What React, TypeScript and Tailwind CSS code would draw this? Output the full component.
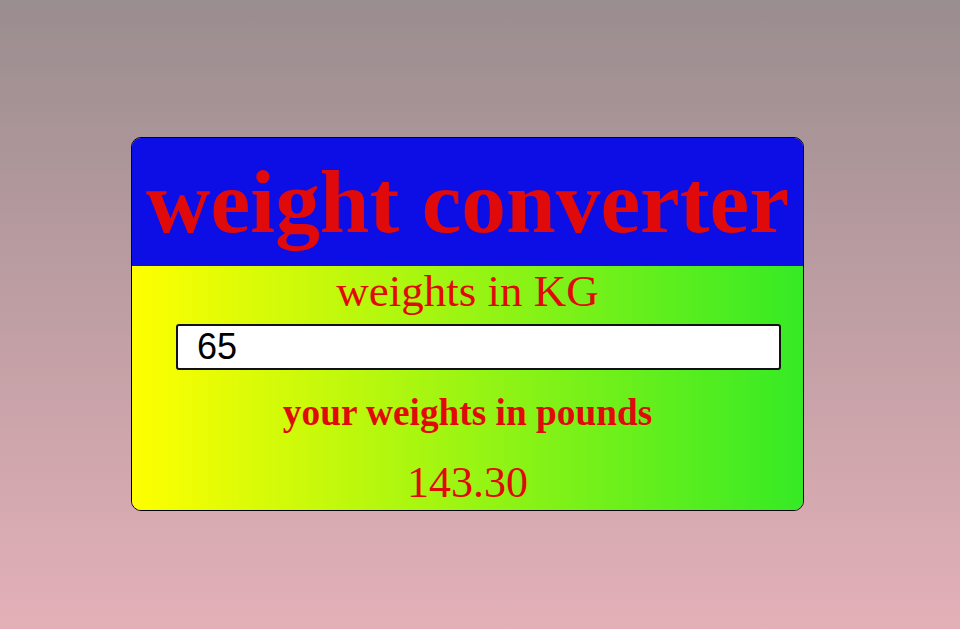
import React from "react";

export default function App() {
  return (
    <div className="min-h-[629px] w-full bg-[linear-gradient(to_bottom,#9a8d8f,#e4b0b8)] pt-[137px] pl-[131px]">
      <div className="w-[673px] overflow-hidden rounded-[10px] border border-black">
        <div className="flex h-[128px] items-center justify-center bg-[#0d0de6]">
          <h1 className="font-['Liberation_Serif',serif] text-[89.4px] font-bold leading-none text-[#e10a0a] whitespace-nowrap">
            weight converter
          </h1>
        </div>
        <div className="flex flex-col bg-[linear-gradient(to_right,#ffff00,#35ea25)] pt-[3px] pb-[5px]">
          <p className="text-center font-['Liberation_Serif',serif] text-[45px] leading-none text-[#e10a0a]">
            weights in KG
          </p>
          <input
            type="text"
            defaultValue="65"
            className="ml-[44px] mt-[10px] h-[46px] w-[605px] rounded-[3px] border-2 border-[#111] bg-white pl-[19px] font-['Liberation_Sans',sans-serif] text-[36px] leading-none text-black outline-none"
          />
          <p className="mt-[24px] text-center font-['Liberation_Serif',serif] text-[37.3px] font-bold leading-none text-[#e10a0a]">
            your weights in pounds
          </p>
          <p className="mt-[30px] text-center font-['Liberation_Serif',serif] text-[44px] leading-none text-[#e10a0a]">
            143.30
          </p>
        </div>
      </div>
    </div>
  );
}
